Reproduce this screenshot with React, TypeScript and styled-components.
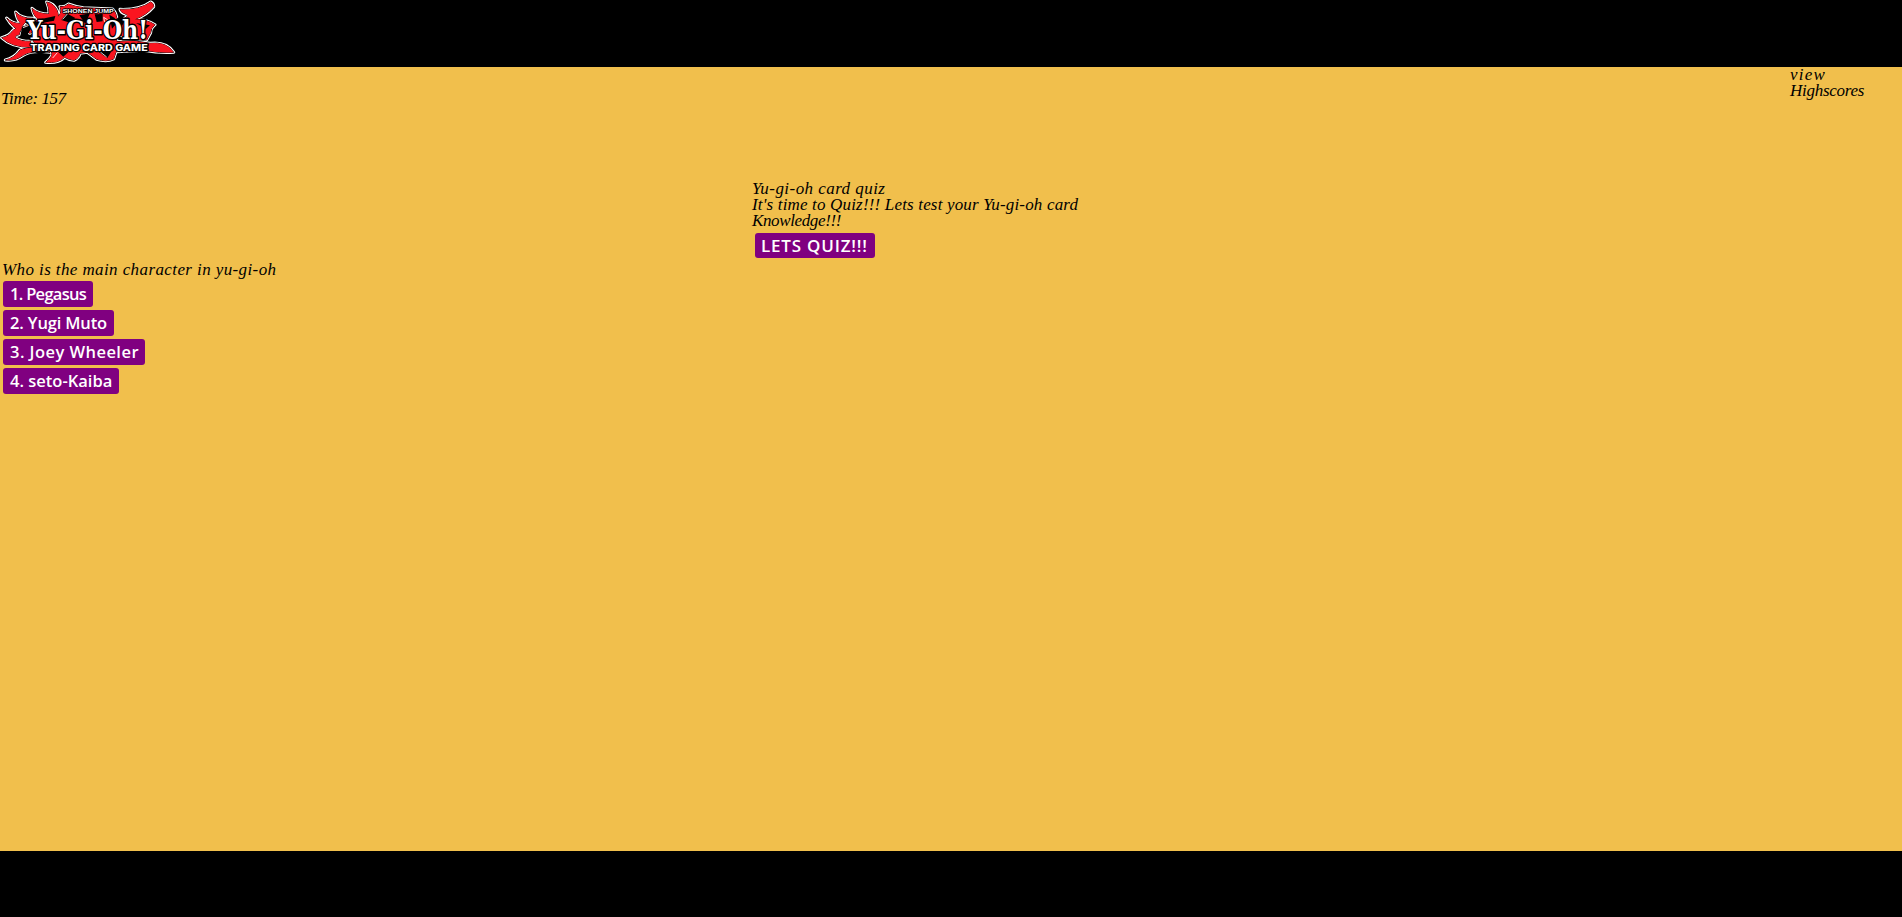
import React from "react";
import styled, { createGlobalStyle } from "styled-components";

const GlobalStyle = createGlobalStyle`
  * { box-sizing: border-box; }
  body {
    margin: 0;
    background: #f1bf4c;
  }
`;

const Page = styled.div`
  display: flex;
  flex-direction: column;
  height: 917px;
  overflow: hidden;
  color: #000;
  font: italic 17px/16px "Liberation Serif", serif;
`;

const Header = styled.header`
  flex: none;
  height: 67px;
  background: #000;
`;

const Logo = styled.svg`
  display: block;
  width: 180px;
  height: 67px;
  font-style: normal;
`;

const Main = styled.main`
  flex: 1;
  background: #f1bf4c;
`;

const TopBar = styled.div`
  display: flex;
  justify-content: space-between;
  align-items: flex-start;
  height: 114px;
`;

const Timer = styled.div`
  padding: 24px 0 0 1px;
`;

const Highscores = styled.div`
  width: 112px;
`;

const Line = styled.div<{ $spacing: number }>`
  height: 16px;
  letter-spacing: ${(p) => p.$spacing}px;
  white-space: nowrap;
`;

const Intro = styled.section`
  width: 398px;
  margin: 0 auto;
  height: 81px;
`;

const Question = styled.section`
  padding-left: 2px;
`;

const Answers = styled.div`
  display: flex;
  flex-direction: column;
  align-items: flex-start;
  gap: 3px;
  padding: 3px 0 0 1px;
`;

const Button = styled.button<{ $width: number; $spacing: number; $start?: boolean }>`
  display: block;
  width: ${(p) => p.$width}px;
  height: ${(p) => (p.$start ? 25 : 26)}px;
  margin: ${(p) => (p.$start ? "4px 0 0 3px" : "0")};
  padding: 0 0 ${(p) => (p.$start ? 0 : 1)}px ${(p) => (p.$start ? 6 : 7)}px;
  border: 0;
  border-radius: 3px;
  background: #800080;
  color: #fff;
  font: 600 ${(p) => (p.$start ? 17 : 16.5)}px/24px "Open Sans", sans-serif;
  letter-spacing: ${(p) => p.$spacing}px;
  text-align: left;
  white-space: nowrap;
`;

const Footer = styled.footer`
  flex: none;
  height: 66px;
  background: #000;
`;

const answers = [
  { label: "1. Pegasus", width: 90, spacing: -0.7 },
  { label: "2. Yugi Muto", width: 111, spacing: -0.15 },
  { label: "3. Joey Wheeler", width: 142, spacing: 0.45 },
  { label: "4. seto-Kaiba", width: 116, spacing: 0 },
];

const emblem = [
  "M20 54 Q38 72 62 70 Q50 58 47 36 Q64 56 100 55 Q64 66 62 94 Q38 84 20 54 Z",
  "M5 113 Q28 108 38 92 Q45 84 62 84 L58 104 Q46 104 46 113 Q60 124 92 124 L92 142 Q35 142 5 113 Z",
  "M16 180 Q42 175 60 150 Q80 140 130 143 L150 157 Q95 150 70 166 Q45 184 16 180 Z",
  "M60 84 Q96 74 115 58 Q100 48 96 25 Q115 42 147 42 Q148 25 140 6 Q162 10 172 32 L178 60 L130 70 L90 100 Z",
  "M165 60 Q190 40 180 20 Q195 22 205 12 Q225 20 250 23 L338 27 Q354 44 350 70 L350 150 L341 177 Q320 187 290 178 L262 157 L240 160 Q238 174 222 181 Q208 180 194 172 Q174 191 137 187 Q165 165 152 152 L100 125 L100 80 Z",
  "M360 28 Q420 30 452 6 Q462 10 461 20 Q440 45 405 58 Q440 58 465 74 Q452 85 452 98 L440 120 L400 120 L346 100 L360 60 Q392 50 378 43 Q362 38 360 28 Z",
  "M350 125 L400 122 L450 130 Q500 124 521 157 Q480 160 430 151 L350 155 Z",
].join(" ");

const YugiohLogo = () => (
  <Logo viewBox="0 0 540 201" role="img" aria-label="Yu-Gi-Oh! Trading Card Game">
    <path d={emblem} fill="#fff" stroke="#fff" strokeWidth="9" strokeLinejoin="round" />
    <path d={emblem} fill="none" stroke="#000" strokeWidth="3" strokeLinejoin="round" />
    <path d={emblem} fill="#fa1520" />
    <g fill="#000">
      <path d="M66 82 Q94 74 106 62 L120 70 L92 88 L78 112 L60 114 Z M120 58 L166 48 L162 62 L122 70 Z M184 60 L200 40 L226 54 L210 68 Z M238 46 L270 40 L256 72 Z M284 43 L308 42 L308 64 L290 66 Z M328 44 L344 54 L350 70 L336 86 Z M100 154 L140 156 L120 164 Z M174 155 L208 154 L190 170 Z M240 153 L286 155 L270 160 Z M296 156 L333 156 L322 174 Z M348 58 L364 46 L376 60 L358 92 Z M408 69 L450 76 L438 86 Z" />
    </g>
    <g fill="none" stroke="#fff" strokeWidth="2.5">
      <path d="M69 83 L92 74 M188 58 L202 42 M311 52 L324 60 L314 66 Z M158 174 L172 158 M301 156 L320 171" />
    </g>
    <g stroke="#000" strokeLinejoin="round" paintOrder="stroke" fill="#fff">
      <text x="188" y="39" fontFamily="Liberation Sans" fontSize="18" fontWeight="700" textLength="153" lengthAdjust="spacingAndGlyphs" strokeWidth="5">SHONEN JUMP</text>
      <text x="80" y="118" fontFamily="DejaVu Serif" fontSize="78" fontWeight="700" textLength="364" lengthAdjust="spacingAndGlyphs" strokeWidth="9">Yu-Gi-Oh!</text>
      <text x="91" y="152" fontFamily="Inter" fontSize="27" fontWeight="800" textLength="352" lengthAdjust="spacingAndGlyphs" strokeWidth="7">TRADING CARD GAME</text>
    </g>
  </Logo>
);

export default function App() {
  return (
    <>
      <GlobalStyle />
      <Page>
        <Header>
          <YugiohLogo />
        </Header>
        <Main>
          <TopBar>
            <Timer>
              <Line $spacing={-0.42}>Time: 157</Line>
            </Timer>
            <Highscores>
              <Line $spacing={1.2}>view</Line>
              <Line $spacing={-0.28}>Highscores</Line>
            </Highscores>
          </TopBar>
          <Intro>
            <Line $spacing={0.45}>Yu-gi-oh card quiz</Line>
            <Line $spacing={0.17}>It's time to Quiz!!! Lets test your Yu-gi-oh card</Line>
            <Line $spacing={-0.37}>Knowledge!!!</Line>
            <Button $start $width={120} $spacing={0.8}>LETS QUIZ!!!</Button>
          </Intro>
          <Question>
            <Line $spacing={0.4}>Who is the main character in yu-gi-oh</Line>
            <Answers>
              {answers.map((a) => (
                <Button key={a.label} $width={a.width} $spacing={a.spacing}>
                  {a.label}
                </Button>
              ))}
            </Answers>
          </Question>
        </Main>
        <Footer />
      </Page>
    </>
  );
}
